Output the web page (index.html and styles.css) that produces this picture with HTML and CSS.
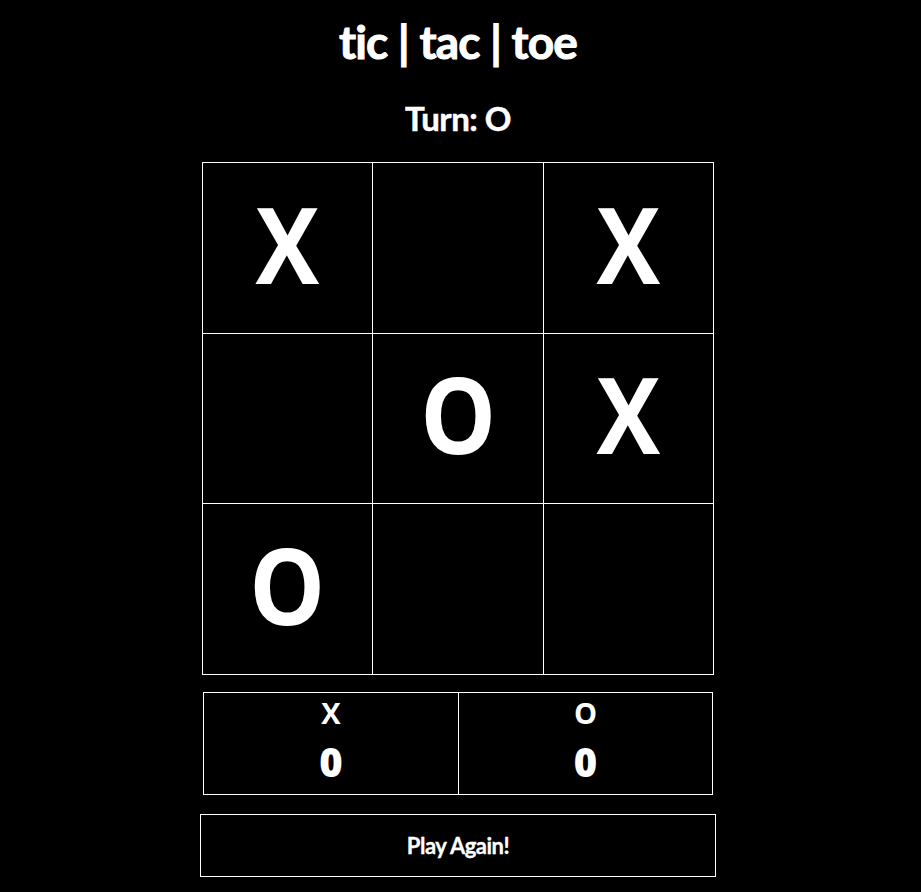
FILE: index.html
```html
<!DOCTYPE html>
<html lang="en">
<head>
<meta charset="utf-8">
<title>tic | tac | toe</title>
<link rel="stylesheet" href="styles.css">
</head>
<body>
<main class="game">
  <h1 class="title">tic | tac | toe</h1>
  <p class="turn">Turn: O</p>
  <div class="board">
    <div class="cell"><span class="mark">X</span></div>
    <div class="cell"></div>
    <div class="cell"><span class="mark">X</span></div>
    <div class="cell"></div>
    <div class="cell"><span class="mark">O</span></div>
    <div class="cell"><span class="mark">X</span></div>
    <div class="cell"><span class="mark">O</span></div>
    <div class="cell"></div>
    <div class="cell"></div>
  </div>
  <div class="scores">
    <div class="score">
      <span class="score-label">X</span>
      <span class="score-value">0</span>
    </div>
    <div class="score">
      <span class="score-label">O</span>
      <span class="score-value">0</span>
    </div>
  </div>
  <button class="again" type="button">Play Again!</button>
</main>
</body>
</html>
```
FILE: styles.css
```css
html, body {
  margin: 0;
  padding: 0;
  background: #000;
  color: #fff;
  font-family: "Lato", "Liberation Sans", sans-serif;
}

.game {
  display: flex;
  flex-direction: column;
  align-items: center;
  padding-right: 5px;
}

.title {
  margin: 14px 0 0;
  font-size: 46px;
  font-weight: 700;
  line-height: 56px;
  letter-spacing: -0.8px;
  -webkit-text-stroke: 1px #fff;
}

.turn {
  margin: 28px 0 0;
  font-size: 33px;
  font-weight: 700;
  line-height: 40px;
  letter-spacing: -0.5px;
  -webkit-text-stroke: 0.5px #fff;
}

.board {
  margin-top: 24px;
  display: grid;
  grid-template-columns: repeat(3, 170.67px);
  grid-template-rows: repeat(3, 170.67px);
  border-left: 1px solid #fff;
  border-top: 1px solid #fff;
}

.cell {
  border-right: 1px solid #fff;
  border-bottom: 1px solid #fff;
  display: flex;
  align-items: center;
  justify-content: center;
  padding-bottom: 10px;
  font-family: "Open Sans", "Lato", sans-serif;
  font-weight: 700;
  font-size: 106px;
  line-height: 1;
}

.mark {
  display: inline-block;
  transform: scaleX(0.9);
}

.scores {
  margin-top: 17px;
  display: grid;
  grid-template-columns: 254px 254px;
  border: 1px solid #fff;
  height: 101px;
}

.score {
  display: flex;
  flex-direction: column;
  align-items: center;
  padding-top: 1px;
}

.score + .score {
  border-left: 1px solid #fff;
}

.score-label {
  font-family: "Open Sans", "Lato", sans-serif;
  font-weight: 700;
  font-size: 29px;
  line-height: 38px;
}

.score-value {
  margin-top: 5px;
  font-family: "Open Sans", "Lato", sans-serif;
  font-weight: 800;
  font-size: 40px;
  line-height: 50px;
}

.again {
  margin-top: 19px;
  width: 516px;
  height: 63px;
  background: #000;
  color: #fff;
  border: 1px solid #fff;
  font-family: "Lato", "Liberation Sans", sans-serif;
  font-weight: 700;
  font-size: 22px;
  letter-spacing: -0.5px;
  -webkit-text-stroke: 0.3px #fff;
  cursor: pointer;
}
```
